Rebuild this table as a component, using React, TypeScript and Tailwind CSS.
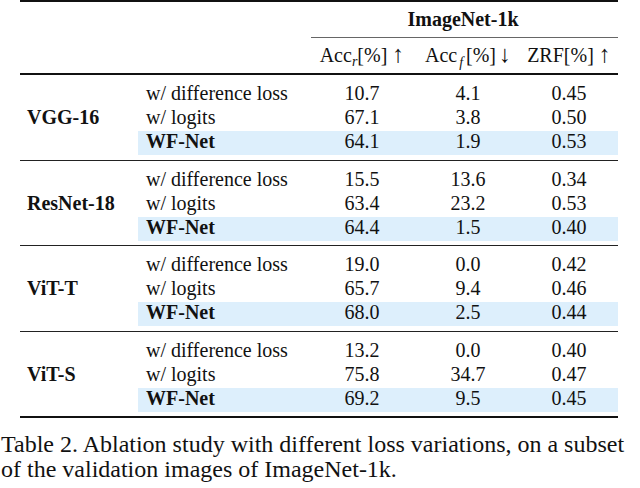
import React from "react";

type Section = { model: string; rows: string[][] };

const sections: Section[] = [
  { model: "VGG-16", rows: [["10.7", "4.1", "0.45"], ["67.1", "3.8", "0.50"], ["64.1", "1.9", "0.53"]] },
  { model: "ResNet-18", rows: [["15.5", "13.6", "0.34"], ["63.4", "23.2", "0.53"], ["64.4", "1.5", "0.40"]] },
  { model: "ViT-T", rows: [["19.0", "0.0", "0.42"], ["65.7", "9.4", "0.46"], ["68.0", "2.5", "0.44"]] },
  { model: "ViT-S", rows: [["13.2", "0.0", "0.40"], ["75.8", "34.7", "0.47"], ["69.2", "9.5", "0.45"]] },
];

const methods = ["w/ difference loss", "w/ logits", "WF-Net"];

function SectionBlock({ s, last }: { s: Section; last: boolean }) {
  return (
    <>
      <div className="pt-[8px] pb-[4.5px]">
        {s.rows.map((r, i) => {
          const hl = i === 2;
          return (
            <div key={i} className="flex h-6 leading-[21px]">
              <div className="w-[118px] pl-[7px] font-bold">{i === 1 ? s.model : ""}</div>
              <div className={`flex flex-1 ${hl ? "bg-[#ddeffc]" : ""}`}>
                <div className={`w-[170px] pl-[8px] ${hl ? "font-bold" : ""}`}>{methods[i]}</div>
                <div className="w-[108px] text-center">{r[0]}</div>
                <div className="w-[104px] text-center">{r[1]}</div>
                <div className="w-[98px] text-center">{r[2]}</div>
              </div>
            </div>
          );
        })}
      </div>
      {last ? <div className="h-[2px] bg-[#111]" /> : <div className="h-px bg-[#222]" />}
    </>
  );
}

export default function App() {
  return (
    <div className="w-[640px] h-[488px] overflow-hidden bg-white text-[#111] font-['Liberation_Serif',serif]">
      <div className="ml-[20px] w-[598px] text-[20px]">
        <div className="h-[2px] bg-[#111]" />
        <div className="flex h-[35px] leading-[35px]">
          <div className="w-[288px]" />
          <div className="flex-1 text-center font-bold">ImageNet-1k</div>
        </div>
        <div className="flex">
          <div className="w-[291px]" />
          <div className="h-px flex-1 bg-[#666]" />
        </div>
        <div className="flex h-[35px] leading-[35px]">
          <div className="w-[288px]" />
          <div className="w-[108px] text-center whitespace-nowrap">
            Acc<span className="italic text-[14px] align-[-4px]">r</span>[%]<span className="ml-[5px] text-[24px] leading-none">↑</span>
          </div>
          <div className="w-[104px] text-center whitespace-nowrap">
            Acc<span className="italic text-[14px] align-[-5px] ml-[2px] mr-[3px]">f</span>[%]<span className="ml-[3px] text-[24px] leading-none">↓</span>
          </div>
          <div className="w-[98px] text-center whitespace-nowrap">
            ZRF[%]<span className="ml-[5px] text-[24px] leading-none">↑</span>
          </div>
        </div>
        <div className="h-[2px] bg-[#111]" />
        {sections.map((s, i) => (
          <SectionBlock key={s.model} s={s} last={i === sections.length - 1} />
        ))}
      </div>
      <div className="mt-[14px] pl-[1px] text-[24px] leading-[25px]">
        <div className="whitespace-nowrap">Table 2. Ablation study with different loss variations, on a subset</div>
        <div className="whitespace-nowrap">of the validation images of ImageNet-1k.</div>
      </div>
    </div>
  );
}
